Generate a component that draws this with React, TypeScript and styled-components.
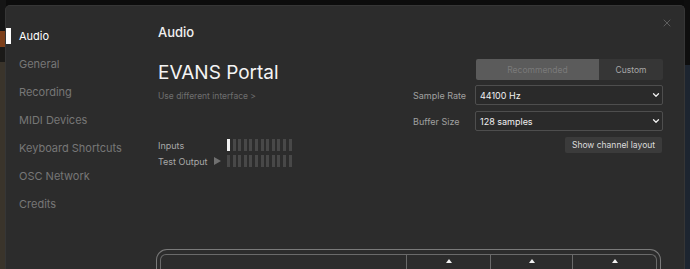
import styled, { createGlobalStyle } from "styled-components";
import { ChevronDown, X } from "lucide-react";

const GlobalStyle = createGlobalStyle`
    html, body {
        margin: 0;
        padding: 0;
        height: 100%;
        overflow: hidden;
    }
    body {
        font-family: "Inter", "Noto Sans", sans-serif;
        background-color: #0c0c0c;
        background-image:
            linear-gradient(to bottom, #151515 0 31px, #7d401b 31px 47px, #1b1a18 47px 62px, #3a342b 62px 100%),
            linear-gradient(to bottom, #0e0e0e 0 65px, #1d2530 65px 100%);
        background-size: 6px 100%, 6px 100%;
        background-position: left top, right top;
        background-repeat: no-repeat;
    }
    #root {
        height: 100%;
    }
`;

const sections = [
    "Audio",
    "General",
    "Recording",
    "MIDI Devices",
    "Keyboard Shortcuts",
    "OSC Network",
    "Credits",
];

const Backdrop = styled.div`
    height: 100%;
    box-sizing: border-box;
    padding: 5px 5px 0 5px;
    display: flex;
`;

const Modal = styled.div`
    position: relative;
    flex: 1;
    display: flex;
    background: #2c2c2c;
    border: 1px solid #363636;
    border-bottom: none;
    border-radius: 5px 5px 0 0;
    overflow: hidden;
`;

const Sidebar = styled.ul`
    list-style: none;
    margin: 0;
    padding: 16px 0 0 0;
    width: 152px;
    flex-shrink: 0;
`;

const NavItem = styled.li<{ $active?: boolean }>`
    display: flex;
    align-items: center;
    height: 28px;
    font-size: 11px;
    color: ${(p) => (p.$active ? "#ffffff" : "#777777")};
    cursor: pointer;
`;

const Marker = styled.span<{ $active?: boolean }>`
    width: 5px;
    height: 16px;
    margin-right: 8px;
    background: ${(p) => (p.$active ? "#ffffff" : "transparent")};
`;

const Content = styled.div`
    flex: 1;
    padding: 18px 21px 0 0;
    display: flex;
    flex-direction: column;
`;

const Title = styled.h2`
    margin: 0;
    font-size: 13px;
    line-height: 16px;
    font-weight: 500;
    color: #f0f0f0;
`;

const CloseButton = styled.button`
    position: absolute;
    top: 11px;
    right: 11px;
    padding: 0;
    border: none;
    background: none;
    color: #6e6e6e;
    display: flex;
`;

const Columns = styled.div`
    display: flex;
    margin-top: 19px;
`;

const LeftCol = styled.div`
    width: 255px;
    display: flex;
    flex-direction: column;
`;

const DeviceName = styled.div`
    margin-top: 2px;
    font-size: 19px;
    line-height: 24px;
    color: #f4f4f4;
`;

const SubLink = styled.div`
    margin-top: 5px;
    font-size: 8.5px;
    line-height: 12px;
    color: #6f6f6f;
`;

const Meters = styled.div`
    margin-top: 37px;
    display: flex;
    flex-direction: column;
    gap: 4px;
`;

const MeterRow = styled.div`
    display: flex;
    align-items: center;
    height: 12px;
`;

const MeterLabel = styled.span`
    width: 56px;
    font-size: 9px;
    color: #a8a8a8;
`;

const PlayIcon = styled.span<{ $show?: boolean }>`
    width: 13px;
    display: flex;
    color: #707070;
    visibility: ${(p) => (p.$show ? "visible" : "hidden")};
`;

const Segments = styled.div`
    display: flex;
    gap: 2.6px;
`;

const Segment = styled.span<{ $lit?: boolean }>`
    width: 3px;
    height: 12px;
    background: ${(p) => (p.$lit ? "#f2f2f2" : "#484848")};
`;

const RightCol = styled.div`
    flex: 1;
    display: flex;
    flex-direction: column;
    align-items: flex-end;
`;

const Segmented = styled.div`
    display: flex;
    width: 187px;
    height: 21px;
    border-radius: 2px;
    overflow: hidden;
`;

const SegButton = styled.div<{ $selected?: boolean; $width: number }>`
    width: ${(p) => p.$width}px;
    display: flex;
    align-items: center;
    justify-content: center;
    font-size: 8.5px;
    background: ${(p) => (p.$selected ? "#5b5b5b" : "#363636")};
    color: ${(p) => (p.$selected ? "#7a7a7a" : "#a8a8a8")};
`;

const FieldRow = styled.div`
    display: flex;
    align-items: center;
    width: 100%;
    margin-top: 5px;
    & + & {
        margin-top: 6px;
    }
`;

const FieldLabel = styled.span`
    width: 62px;
    font-size: 9px;
    color: #a0a0a0;
`;

const SelectBox = styled.div`
    flex: 1;
    height: 20px;
    box-sizing: border-box;
    border: 1px solid #4e4e4e;
    border-radius: 2px;
    background: #2a2a2a;
    display: flex;
    align-items: center;
    justify-content: space-between;
    padding: 0 1px 0 4px;
    font-size: 9px;
    color: #f0f0f0;
`;

const ActionButton = styled.button`
    margin-top: 6px;
    margin-right: 1px;
    width: 97px;
    height: 16px;
    border: none;
    border-radius: 2px;
    background: #3b3b3b;
    color: #dddddd;
    font-family: inherit;
    font-size: 8.5px;
    padding: 0;
`;

const Diagram = styled.div`
    margin-top: 82px;
    margin-left: -2px;
    width: 505px;
    box-sizing: border-box;
    border: 1.5px solid #7a7a7a;
    border-bottom: none;
    border-radius: 11px 11px 0 0;
    padding: 4px 3px 0 3px;
    height: 30px;
`;

const DiagramInner = styled.div`
    height: 100%;
    box-sizing: border-box;
    border: 1.5px solid #6a6a6a;
    border-bottom: none;
    border-radius: 6px 6px 0 0;
    display: flex;
`;

const Cell = styled.div<{ $width: number }>`
    width: ${(p) => p.$width}px;
    flex-shrink: 0;
    display: flex;
    justify-content: center;
    padding-top: 4px;
    & + & {
        border-left: 1.5px solid #6a6a6a;
    }
    &:last-child {
        flex: 1;
    }
`;

const Arrow = styled.span`
    width: 0;
    height: 0;
    border-left: 3.5px solid transparent;
    border-right: 3.5px solid transparent;
    border-bottom: 4px solid #f0f0f0;
`;

const App = () => {
    return (
        <>
            <GlobalStyle />
            <Backdrop>
                <Modal>
                    <Sidebar>
                        {sections.map((name, i) => (
                            <NavItem key={name} $active={i === 0}>
                                <Marker $active={i === 0} />
                                {name}
                            </NavItem>
                        ))}
                    </Sidebar>
                    <Content>
                        <Title>Audio</Title>
                        <Columns>
                            <LeftCol>
                                <DeviceName>EVANS Portal</DeviceName>
                                <SubLink>Use different interface &gt;</SubLink>
                                <Meters>
                                    <MeterRow>
                                        <MeterLabel>Inputs</MeterLabel>
                                        <PlayIcon />
                                        <Segments>
                                            {Array.from({ length: 12 }).map((_, i) => (
                                                <Segment key={i} $lit={i === 0} />
                                            ))}
                                        </Segments>
                                    </MeterRow>
                                    <MeterRow>
                                        <MeterLabel>Test Output</MeterLabel>
                                        <PlayIcon $show>
                                            <svg width="7" height="8" viewBox="0 0 7 8">
                                                <path d="M0 0 L7 4 L0 8 Z" fill="currentColor" />
                                            </svg>
                                        </PlayIcon>
                                        <Segments>
                                            {Array.from({ length: 12 }).map((_, i) => (
                                                <Segment key={i} />
                                            ))}
                                        </Segments>
                                    </MeterRow>
                                </Meters>
                            </LeftCol>
                            <RightCol>
                                <Segmented>
                                    <SegButton $selected $width={123}>Recommended</SegButton>
                                    <SegButton $width={64}>Custom</SegButton>
                                </Segmented>
                                <FieldRow>
                                    <FieldLabel>Sample Rate</FieldLabel>
                                    <SelectBox>
                                        <span>44100 Hz</span>
                                        <ChevronDown size={10} strokeWidth={3} />
                                    </SelectBox>
                                </FieldRow>
                                <FieldRow>
                                    <FieldLabel>Buffer Size</FieldLabel>
                                    <SelectBox>
                                        <span>128 samples</span>
                                        <ChevronDown size={10} strokeWidth={3} />
                                    </SelectBox>
                                </FieldRow>
                                <ActionButton>Show channel layout</ActionButton>
                            </RightCol>
                        </Columns>
                        <Diagram>
                            <DiagramInner>
                                <Cell $width={245} />
                                <Cell $width={83}>
                                    <Arrow />
                                </Cell>
                                <Cell $width={81}>
                                    <Arrow />
                                </Cell>
                                <Cell $width={86}>
                                    <Arrow />
                                </Cell>
                            </DiagramInner>
                        </Diagram>
                    </Content>
                    <CloseButton>
                        <X size={12} strokeWidth={1.5} />
                    </CloseButton>
                </Modal>
            </Backdrop>
        </>
    );
};

export default App;
